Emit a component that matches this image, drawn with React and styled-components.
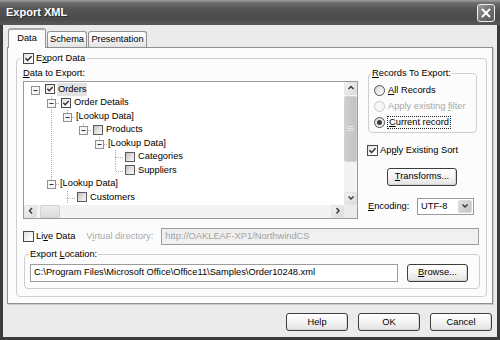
import React from 'react';
import styled, { createGlobalStyle } from 'styled-components';

const GlobalStyle = createGlobalStyle`
  html, body { margin: 0; padding: 0; background: #ffffff; }
  body {
    font-family: "Liberation Sans", Arial, sans-serif;
    font-size: 9.3px;
    line-height: 11px;
    color: #000;
  }
  * { box-sizing: border-box; }
`;

const Window = styled.div`
  width: 500px;
  height: 340px;
  display: flex;
  flex-direction: column;
  overflow: hidden;
`;

const TitleBar = styled.div`
  height: 25px;
  flex: none;
  display: flex;
  align-items: center;
  justify-content: space-between;
  padding: 0 5px 0 6px;
  background: linear-gradient(#a0a0a0 0, #6c6c6c 3px, #555 35%, #4a4a4a 75%, #585858 100%);
`;

const Title = styled.span`
  color: #fff;
  font-weight: bold;
  font-size: 11px;
  text-shadow: 1px 1px 0 #2e2e2e;
`;

const CloseButton = styled.div`
  width: 18px;
  height: 18px;
  border: 1px solid #f0f0f0;
  border-radius: 3px;
  background: linear-gradient(135deg, #9a9a9a, #6a6a6a 60%, #5c5c5c);
  display: flex;
  align-items: center;
  justify-content: center;
`;

const Frame = styled.div`
  flex: 1;
  display: flex;
  flex-direction: column;
  background: #ebebeb;
  border-left: 3px solid #3c3c3c;
  border-right: 3px solid #3c3c3c;
  border-bottom: 3px solid #3c3c3c;
  padding: 3px 0 0 0;
`;

const TabStrip = styled.div`
  height: 19px;
  flex: none;
  display: flex;
  align-items: flex-end;
  gap: 1px;
  padding-left: 5px;
`;

const Tab = styled.div`
  position: relative;
  z-index: ${p => (p.$active ? 2 : 0)};
  width: ${p => p.$w}px;
  height: ${p => (p.$active ? 20 : 16)}px;
  margin-bottom: ${p => (p.$active ? -1 : 0)}px;
  border: 1px solid #929292;
  border-bottom: none;
  border-top: ${p => (p.$active ? '2px solid #a9a9a9' : '1px solid #929292')};
  border-radius: 3px 3px 0 0;
  background: ${p => (p.$active ? '#fcfcfc' : 'linear-gradient(#ffffff, #f2f2f2 60%, #e2e2e2)')};
  display: flex;
  align-items: center;
  justify-content: center;
  padding-bottom: ${p => (p.$active ? 2 : 0)}px;
`;

const Pane = styled.div`
  margin-left: 4px;
  width: 486px;
  height: 257px;
  flex: none;
  border: 1px solid #8f8f8f;
  background: #fcfcfc;
  box-shadow: 1px 1px 0 #c9c9c9;
  padding: 4px 0 0 8px;
`;

const Group = styled.fieldset`
  margin: ${p => p.$mt || 0}px 0 0 ${p => p.$ml || 0}px;
  width: ${p => p.$w}px;
  padding: 0 ${p => p.$pr || 6}px ${p => p.$pb || 7}px ${p => p.$pl || 6}px;
  border: 1px solid #cfcfcf;
  border-radius: 4px;
  min-width: 0;
`;

const Legend = styled.legend`
  padding: 0 ${p => p.$pad || 1}px;
  margin-left: ${p => p.$ml || -1}px;
  line-height: 11px;
  color: #000;
`;

const LegendInner = styled.span`
  display: inline-flex;
  align-items: center;
  gap: 2px;
  height: 12px;
`;

const U = styled.span`
  text-decoration: underline;
`;

const TopSection = styled.div`
  display: flex;
  margin-top: 2px;
  gap: 9px;
`;

const LeftCol = styled.div`
  display: flex;
  flex-direction: column;
  gap: 2px;
`;

const RightCol = styled.div`
  width: 110px;
  display: flex;
  flex-direction: column;
`;

const Label = styled.span`
  color: ${p => (p.$disabled ? '#a8a8a8' : '#000')};
  margin-left: ${p => p.$ml || 0}px;
  white-space: nowrap;
  line-height: 11px;
`;

/* ---------- Tree ---------- */

const Tree = styled.div`
  width: 335px;
  height: 138px;
  border: 1px solid #9a9a9a;
  background: #fff;
  display: grid;
  grid-template-columns: 1fr 13px;
  grid-template-rows: 1fr 13px;
`;

const TreeContent = styled.div`
  overflow: hidden;
  padding: 1px 0 0 3px;
`;

const TreeRow = styled.div`
  height: 13.5px;
  display: flex;
  align-items: center;
`;

const TreeLabel = styled.span`
  margin-left: ${p => (p.$afterBox ? 2 : 0)}px;
  padding: 1px 1px;
  line-height: 11px;
  white-space: nowrap;
  background: ${p => (p.$selected ? '#e2e2e2' : 'transparent')};
`;

const CellSvg = styled.svg`
  flex: none;
  display: block;
`;

const LINE = '#b2b2b2';

function Guide({ line }) {
  return (
    <CellSvg width="16" height="13.5" viewBox="0 0 16 13.5">
      {line && <line x1="8.5" y1="0" x2="8.5" y2="13.5" stroke={LINE} strokeDasharray="1 1" />}
    </CellSvg>
  );
}

function Node({ level, exp, next }) {
  return (
    <CellSvg width="16" height="13.5" viewBox="0 0 16 13.5">
      {level > 0 && (
        <>
          <line x1="8.5" y1="0" x2="8.5" y2="7" stroke={LINE} strokeDasharray="1 1" />
          <line x1="9" y1="7.5" x2="16" y2="7.5" stroke={LINE} strokeDasharray="1 1" />
        </>
      )}
      {next && <line x1="8.5" y1="7" x2="8.5" y2="13.5" stroke={LINE} strokeDasharray="1 1" />}
      {exp && (
        <>
          <rect x="4.5" y="3.5" width="8" height="8" fill="#f6f6f6" stroke="#8f8f8f" />
          <line x1="6.5" y1="7.5" x2="10.5" y2="7.5" stroke="#333" />
        </>
      )}
    </CellSvg>
  );
}

const Box = styled.span`
  flex: none;
  width: ${p => p.$size}px;
  height: ${p => p.$size}px;
  margin-left: ${p => p.$ml || 0}px;
  border: 1px solid ${p => (p.$shade ? '#5c5c5c' : '#4a4a4a')};
  background: ${p =>
    p.$shade
      ? 'linear-gradient(135deg, #bdbdbd, #e4e4e4 55%, #f5f5f5)'
      : 'linear-gradient(135deg, #dedede, #f7f7f7 60%, #ffffff)'};
  display: inline-flex;
  align-items: center;
  justify-content: center;
`;

function Check({ size = 11, checked, shade, ml }) {
  return (
    <Box $size={size} $shade={shade} $ml={ml}>
      {checked && (
        <svg width={size - 2} height={size - 2} viewBox="0 0 9 9">
          <polyline points="1.5,4.2 3.6,6.4 7.6,2.2" fill="none" stroke="#2c2c2c" strokeWidth="1.5" />
        </svg>
      )}
    </Box>
  );
}

const ScrollV = styled.div`
  background: #f3f3f3;
  display: flex;
  flex-direction: column;
`;

const ScrollH = styled.div`
  background: #f3f3f3;
  display: flex;
  align-items: stretch;
`;

const ArrowBtn = styled.div`
  flex: none;
  width: 13px;
  height: 13px;
  border: 1px solid #e2e2e2;
  border-radius: 2px;
  background: linear-gradient(135deg, #f4f4f4, #d9d9d9);
  display: flex;
  align-items: center;
  justify-content: center;
`;

const Thumb = styled.div`
  flex: none;
  margin: ${p => (p.$horizontal ? '0 0 0 3px' : '1px 0 0 0')};
  width: ${p => (p.$horizontal ? '20px' : 'auto')};
  height: ${p => (p.$horizontal ? 'auto' : '66px')};
  border: 1px solid #d2d2d2;
  border-radius: 2px;
  background: ${p => (p.$horizontal ? 'linear-gradient(#ececec, #dcdcdc)' : 'linear-gradient(90deg, #cfcfcf, #c2c2c2)')};
  display: flex;
  align-items: center;
  justify-content: center;
`;

const Spacer = styled.div`
  flex: 1;
`;

const Corner = styled.div`
  background: #ebebeb;
`;

function Chevron({ dir }) {
  const pts = {
    up: '1.5,5 4,2.5 6.5,5',
    down: '1.5,2.5 4,5 6.5,2.5',
    left: '5,1 2.5,3.75 5,6.5',
    right: '2.5,1 5,3.75 2.5,6.5',
  }[dir];
  return (
    <svg width="8" height="7.5" viewBox="0 0 8 7.5">
      <polyline points={pts} fill="none" stroke="#3c3c3c" strokeWidth="1.5" />
    </svg>
  );
}

function Grip() {
  return (
    <svg width="7" height="7" viewBox="0 0 7 7">
      <line x1="0" y1="1.5" x2="7" y2="1.5" stroke="#e6e6e6" />
      <line x1="0" y1="3.5" x2="7" y2="3.5" stroke="#e6e6e6" />
      <line x1="0" y1="5.5" x2="7" y2="5.5" stroke="#e6e6e6" />
    </svg>
  );
}

/* ---------- Right column ---------- */

const RadioRow = styled.div`
  display: flex;
  align-items: center;
  gap: 3px;
  height: 13px;
  margin-top: ${p => p.$mt}px;
`;

const Radio = styled.span`
  flex: none;
  width: 11px;
  height: 11px;
  border-radius: 50%;
  border: 1px solid ${p => (p.$disabled ? '#c9c9c9' : '#4d4d4d')};
  background: ${p => (p.$disabled ? '#f7f7f7' : 'linear-gradient(135deg, #d9d9d9, #fbfbfb)')};
  display: inline-flex;
  align-items: center;
  justify-content: center;
  &::after {
    content: '';
    display: ${p => (p.$on ? 'block' : 'none')};
    width: 5px;
    height: 5px;
    border-radius: 50%;
    background: #3b3b3b;
  }
`;

const Focus = styled.span`
  outline: 1px dotted #222;
  outline-offset: 0;
  padding: 0 1px;
`;

const CheckRow = styled.div`
  display: flex;
  align-items: center;
  gap: 2px;
  height: 13px;
  margin-top: ${p => p.$mt || 0}px;
`;

const Button = styled.div`
  width: ${p => p.$w}px;
  height: ${p => p.$h || 18}px;
  margin-top: ${p => p.$mt || 0}px;
  margin-left: ${p => p.$ml || 0}px;
  flex: none;
  border: 1px solid #3e3e3e;
  border-radius: 3px;
  background: linear-gradient(#ffffff, #f4f4f4 50%, #e2e2e2);
  box-shadow: inset -1px -1px 0 #d4d4d4;
  display: flex;
  align-items: center;
  justify-content: center;
  white-space: nowrap;
`;

const EncodingRow = styled.div`
  display: flex;
  align-items: center;
  margin-top: 12px;
  padding-left: 1px;
`;

const Select = styled.div`
  margin-left: auto;
  margin-right: 3px;
  width: 57px;
  height: 17px;
  border: 1px solid #999;
  background: #fff;
  display: flex;
  align-items: center;
  justify-content: space-between;
  padding: 1px 1px 1px 3px;
`;

const SelectArrow = styled.div`
  width: 14px;
  height: 13px;
  border-radius: 2px;
  background: linear-gradient(135deg, #e0e0e0, #c2c2c2);
  border: 1px solid #d9d9d9;
  display: flex;
  align-items: center;
  justify-content: center;
`;

/* ---------- Lower rows ---------- */

const LiveRow = styled.div`
  display: flex;
  align-items: center;
  height: 17px;
  margin-top: 9px;
`;

const TextInput = styled.div`
  width: ${p => p.$w}px;
  height: ${p => p.$h || 17}px;
  margin-left: ${p => p.$ml || 0}px;
  flex: none;
  border: 1px solid #9c9c9c;
  background: ${p => (p.$disabled ? '#f0f0f0' : '#ffffff')};
  color: ${p => (p.$disabled ? '#a3a3a3' : '#000')};
  display: flex;
  align-items: center;
  padding-left: 3px;
  white-space: nowrap;
  overflow: hidden;
`;

const LocationRow = styled.div`
  display: flex;
  align-items: center;
  margin-top: 4px;
  gap: 9px;
`;

const Footer = styled.div`
  display: flex;
  justify-content: flex-end;
  gap: 10px;
  margin-top: 9px;
  padding-right: 5px;
`;

const rows = [
  { level: 0, label: 'Orders', exp: true, cb: 'checked', selected: true, guides: [] },
  { level: 1, label: 'Order Details', exp: true, cb: 'checked', next: true, guides: [false] },
  { level: 2, label: '[Lookup Data]', exp: true, guides: [false, true] },
  { level: 3, label: 'Products', exp: true, cb: 'empty', guides: [false, true, false] },
  { level: 4, label: '[Lookup Data]', exp: true, guides: [false, true, false, false] },
  { level: 5, label: 'Categories', cb: 'empty', next: true, guides: [false, true, false, false, false] },
  { level: 5, label: 'Suppliers', cb: 'empty', guides: [false, true, false, false, false] },
  { level: 1, label: '[Lookup Data]', exp: true, guides: [false] },
  { level: 2, label: 'Customers', cb: 'empty', next: true, guides: [false, false] },
];

export default function App() {
  return (
    <>
      <GlobalStyle />
      <Window>
        <TitleBar>
          <Title>Export XML</Title>
          <CloseButton>
            <svg width="10" height="10" viewBox="0 0 10 10">
              <line x1="1" y1="1" x2="9" y2="9" stroke="#fff" strokeWidth="2" />
              <line x1="9" y1="1" x2="1" y2="9" stroke="#fff" strokeWidth="2" />
            </svg>
          </CloseButton>
        </TitleBar>
        <Frame>
          <TabStrip>
            <Tab $active $w={38}>Data</Tab>
            <Tab $w={40}>Schema</Tab>
            <Tab $w={59}>Presentation</Tab>
          </TabStrip>
          <Pane>
            <Group $w={471} $pb={7}>
              <Legend $pad={2} $ml={-2}>
                <LegendInner>
                  <Check checked />
                  <span>E<U>x</U>port Data</span>
                </LegendInner>
              </Legend>
              <TopSection>
                <LeftCol>
                  <Label><U>D</U>ata to Export:</Label>
                  <Tree>
                    <TreeContent>
                      {rows.map((r, i) => (
                        <TreeRow key={i}>
                          {r.guides.map((g, k) => (
                            <Guide key={k} line={g} />
                          ))}
                          <Node level={r.level} exp={r.exp} next={r.next} />
                          {r.cb && <Check size={10} checked={r.cb === 'checked'} shade={r.cb === 'empty'} ml={2} />}
                          <TreeLabel $afterBox={!!r.cb} $selected={r.selected}>{r.label}</TreeLabel>
                        </TreeRow>
                      ))}
                    </TreeContent>
                    <ScrollV>
                      <ArrowBtn><Chevron dir="up" /></ArrowBtn>
                      <Thumb><Grip /></Thumb>
                      <Spacer />
                      <ArrowBtn><Chevron dir="down" /></ArrowBtn>
                    </ScrollV>
                    <ScrollH>
                      <ArrowBtn><Chevron dir="left" /></ArrowBtn>
                      <Thumb $horizontal />
                      <Spacer />
                      <ArrowBtn><Chevron dir="right" /></ArrowBtn>
                    </ScrollH>
                    <Corner />
                  </Tree>
                </LeftCol>
                <RightCol>
                  <Group $w={109} $ml={1} $pl={5} $pr={4} $pb={3}>
                    <Legend $pad={1} $ml={-3}><U>R</U>ecords To Export:</Legend>
                    <RadioRow $mt={5}>
                      <Radio />
                      <Label><U>A</U>ll Records</Label>
                    </RadioRow>
                    <RadioRow $mt={3}>
                      <Radio $disabled />
                      <Label $disabled>Apply existing <U>f</U>ilter</Label>
                    </RadioRow>
                    <RadioRow $mt={3}>
                      <Radio $on />
                      <Focus><U>C</U>urrent record</Focus>
                    </RadioRow>
                  </Group>
                  <CheckRow $mt={11}>
                    <Check checked />
                    <Label>Ap<U>p</U>ly Existing Sort</Label>
                  </CheckRow>
                  <Button $w={70} $mt={11} $ml={20}><span><U>T</U>ransforms...</span></Button>
                  <EncodingRow>
                    <Label><U>E</U>ncoding:</Label>
                    <Select>
                      <span>UTF-8</span>
                      <SelectArrow><Chevron dir="down" /></SelectArrow>
                    </Select>
                  </EncodingRow>
                </RightCol>
              </TopSection>
              <LiveRow>
                <Check />
                <Label $ml={2}>Li<U>v</U>e Data</Label>
                <Label $disabled $ml={11}>V<U>i</U>rtual directory:</Label>
                <TextInput $disabled $w={318} $ml={8}>http://OAKLEAF-XP1/NorthwindCS</TextInput>
              </LiveRow>
              <Group $w={456} $ml={1} $mt={4} $pl={5} $pr={5} $pb={6}>
                <Legend $pad={1} $ml={-1}>Export <U>L</U>ocation:</Legend>
                <LocationRow>
                  <TextInput $w={368} $h={18}>C:\Program Files\Microsoft Office\Office11\Samples\Order10248.xml</TextInput>
                  <Button $w={61} $h={18}><span><U>B</U>rowse...</span></Button>
                </LocationRow>
              </Group>
            </Group>
          </Pane>
          <Footer>
            <Button $w={62}>Help</Button>
            <Button $w={62}>OK</Button>
            <Button $w={62}>Cancel</Button>
          </Footer>
        </Frame>
      </Window>
    </>
  );
}
